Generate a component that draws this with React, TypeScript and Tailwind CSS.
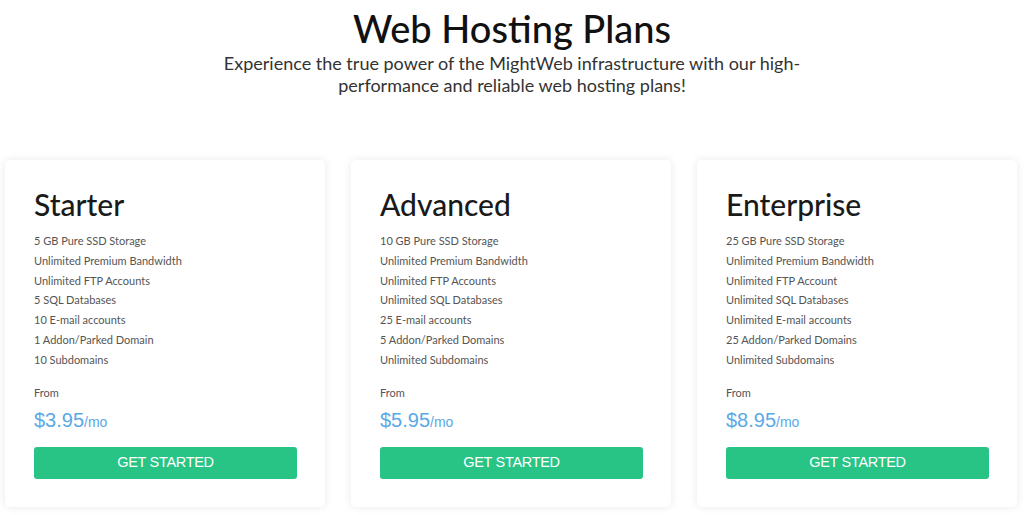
import React from 'react';

type Plan = {
  name: string;
  features: string[];
  price: string;
};

const plans: Plan[] = [
  {
    name: 'Starter',
    price: '$3.95',
    features: [
      '5 GB Pure SSD Storage',
      'Unlimited Premium Bandwidth',
      'Unlimited FTP Accounts',
      '5 SQL Databases',
      '10 E-mail accounts',
      '1 Addon/Parked Domain',
      '10 Subdomains',
    ],
  },
  {
    name: 'Advanced',
    price: '$5.95',
    features: [
      '10 GB Pure SSD Storage',
      'Unlimited Premium Bandwidth',
      'Unlimited FTP Accounts',
      'Unlimited SQL Databases',
      '25 E-mail accounts',
      '5 Addon/Parked Domains',
      'Unlimited Subdomains',
    ],
  },
  {
    name: 'Enterprise',
    price: '$8.95',
    features: [
      '25 GB Pure SSD Storage',
      'Unlimited Premium Bandwidth',
      'Unlimited FTP Account',
      'Unlimited SQL Databases',
      'Unlimited E-mail accounts',
      '25 Addon/Parked Domains',
      'Unlimited Subdomains',
    ],
  },
];

// Single pricing card
const PlanCard: React.FC<{ plan: Plan }> = ({ plan }) => (
  <div className="flex flex-col rounded-[5px] bg-white pl-[29px] pr-[28px] pt-[24px] pb-[28px] shadow-[0_0_10px_rgba(0,0,0,0.09)]">
    <h2 className="text-[30px] leading-[40px] font-medium text-[#1a1a1a]">{plan.name}</h2>
    <ul className="mt-[7px] flex flex-col">
      {plan.features.map((f) => (
        <li key={f} className="text-[11px] leading-[19.8px] text-[#555]">
          {f}
        </li>
      ))}
    </ul>
    <div className="mt-[13px] text-[11px] leading-[20px] text-[#555]">From</div>
    <div className="mt-[4px] flex items-baseline font-['Liberation_Sans',Arial,sans-serif] text-[#5aa9e6] leading-[26px]">
      <span className="text-[20px]">{plan.price}</span>
      <span className="text-[14px]">/mo</span>
    </div>
    <button
      type="button"
      className="mt-[12px] h-[32px] w-full rounded-[3px] bg-[#27c485] font-['Liberation_Sans',Arial,sans-serif] text-[14.5px] tracking-[-0.3px] text-white"
    >
      GET STARTED
    </button>
  </div>
);

export default function App() {
  return (
    <div className="min-h-[515px] w-[1024px] bg-white font-['Lato','Noto_Sans',sans-serif]">
      <div className="flex flex-col items-center pt-[5px]">
        <h1 className="text-[38px] leading-[46px] font-medium text-[#111]">Web Hosting Plans</h1>
        <p className="mt-[1px] w-[600px] text-center text-[18px] leading-[22px] text-[#333]">
          Experience the true power of the MightWeb infrastructure with our high-performance and
          reliable web hosting plans!
        </p>
      </div>
      <div className="mt-[64px] grid grid-cols-[320px_320px_320px] gap-[26px] px-[5px]">
        {plans.map((p) => (
          <PlanCard key={p.name} plan={p} />
        ))}
      </div>
    </div>
  );
}
